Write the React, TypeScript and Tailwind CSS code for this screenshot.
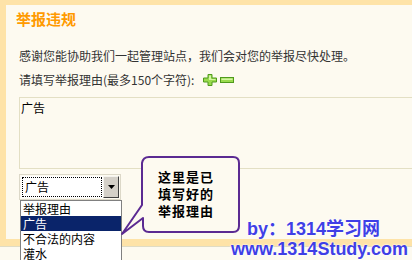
const cjk = "font-['Noto_Sans_CJK_SC','Noto_Sans',sans-serif]";

function PlusIcon() {
  return (
    <svg width="14" height="12" viewBox="0 0 14 12" className="block">
      <path
        d="M5 0.5 H9 V4 H13.5 V8 H9 V11.5 H5 V8 H0.5 V4 H5 Z"
        fill="#9ADB4E"
        stroke="#4F9A1C"
        strokeWidth="1"
      />
      <path d="M6 1.5 H8 V5 H12.5 V6 H6 Z" fill="#D4F5A4" />
    </svg>
  );
}

function MinusIcon() {
  return (
    <svg width="14" height="6" viewBox="0 0 14 6" className="block">
      <rect x="0.5" y="0.5" width="13" height="5" fill="#9ADB4E" stroke="#4F9A1C" strokeWidth="1" />
      <rect x="1.5" y="1.5" width="11" height="1.5" fill="#D4F5A4" />
    </svg>
  );
}

const options = ["举报理由", "广告", "不合法的内容", "灌水"];

export default function App() {
  return (
    <div className={`relative w-[412px] h-[260px] overflow-hidden bg-[#FEE3A8] ${cjk}`}>
      <div className="ml-[6px] mt-[5px] h-[234px] bg-[#FDFAF0] pl-[13px] pt-[4px] text-[12px] text-[#333]">
        <h2 className="-ml-[3px] text-[15px] font-bold leading-[20px] text-[#FF9A00]">举报违规</h2>
        <p className="mt-[19px] leading-[16px] whitespace-nowrap">
          感谢您能协助我们一起管理站点，我们会对您的举报尽快处理。
        </p>
        <div className="mt-[8px] flex items-center gap-[3px] leading-[16px]">
          <span>请填写举报理由(最多150个字符):</span>
          <span className="ml-[6px]"><PlusIcon /></span>
          <MinusIcon />
        </div>
        <div className="mt-[9px] h-[72px] w-[400px] border border-[#E3DFC4] bg-[#FDFAF0] pl-[1px] pt-[2px] leading-[16px] text-black">
          广告
        </div>
        <div className="mt-[5px] h-[26px] w-[102px] border border-[#DCD8C8] p-[1px]">
          <div className="flex h-full bg-white">
            <div className="m-[1px] flex flex-1 items-center border border-dotted border-black pl-[2px] text-[12px] text-black">
              广告
            </div>
            <div className="flex w-[16px] items-center justify-center border border-t-[#F4F3EE] border-l-[#F4F3EE] border-r-[#404040] border-b-[#404040] bg-[#D4D0C8]">
              <svg width="7" height="4" viewBox="0 0 7 4">
                <path d="M0 0 H7 L3.5 4 Z" fill="#000" />
              </svg>
            </div>
          </div>
        </div>
      </div>
      <div className="mt-[7px] h-[20px] border-t border-[#E0DCC4] bg-[#FDFAF0]" />

      <ul className="absolute left-[20px] top-[200px] w-[102px] border border-[#808080] bg-white text-[12px] text-black">
        {options.map((o, i) => (
          <li
            key={o}
            className={
              i === 1
                ? "flex h-[15px] items-center overflow-hidden pl-[2px] leading-[14px] bg-[#0A246A] text-white"
                : "flex h-[15px] items-center overflow-hidden pl-[2px] leading-[14px]"
            }
          >
            {o}
          </li>
        ))}
      </ul>

      <svg className="pointer-events-none absolute left-0 top-0" width="412" height="260" viewBox="0 0 412 260">
        <path
          d="M149 157 H233 Q239 157 239 163 V226 Q239 232 233 232 H149 Q143 232 143 226 V218 L122 234 L142 205 V163 Q143 157 149 157 Z"
          fill="#FDFAF0"
          stroke="#5B2A92"
          strokeWidth="2"
          strokeLinejoin="round"
        />
      </svg>
      <div className="absolute left-[158px] top-[168px] text-[13px] font-bold leading-[17px] tracking-[1px] text-black">
        <div>这里是已</div>
        <div>填写好的</div>
        <div>举报理由</div>
      </div>

      <div className="absolute left-[247px] top-[220px] whitespace-nowrap text-[18px] font-bold leading-[18px] text-[#3F3FE6] [text-shadow:0_0_2px_#fff,0_0_2px_#fff] font-['Liberation_Sans','Noto_Sans_CJK_SC',sans-serif]">
        by：1314学习网
      </div>
      <div className="absolute left-[231px] top-[240px] whitespace-nowrap text-[18px] font-bold leading-[18px] text-[#3F3FE6] [text-shadow:0_0_2px_#fff,0_0_2px_#fff] font-['Liberation_Sans',sans-serif]">
        www.1314Study.com
      </div>
    </div>
  );
}
